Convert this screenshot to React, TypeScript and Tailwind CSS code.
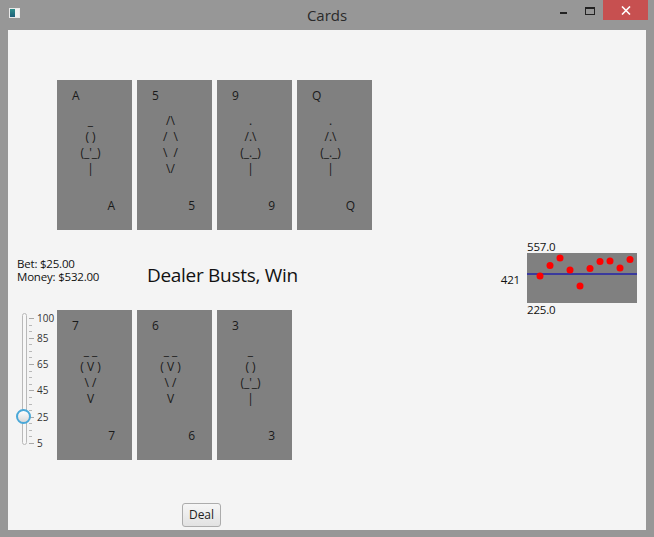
import React from "react";

const FONT = { fontFamily: '"Open Sans", "Noto Sans", sans-serif' };

const CLUB = ["_", "( )", "(_'_)", "|"];
const SPADE = [".", "/.\\", "(_._)", "|"];
const DIAMOND = ["/\\", "/  \\", "\\  /", "\\/"];
const HEART = ["_ _", "( V )", "\\ /", "V"];

function Card({ rank, art }: { rank: string; art: string[] }) {
  return (
    <div className="w-[75px] h-[150px] bg-[#808080] flex flex-col text-[12px] text-[#1a1a1a]">
      <div className="pl-[15px] pt-[8px] leading-[16px]">{rank}</div>
      <div className="mt-[9px] pr-[8px] flex flex-col items-center leading-[16px] whitespace-pre h-[64px]">
        {art.map((l, i) => (
          <div key={i}>{l}</div>
        ))}
      </div>
      <div className="mt-auto self-end pr-[17px] pb-[16px] leading-[16px]">{rank}</div>
    </div>
  );
}

const MIN = 5;
const MAX = 100;
const TOP = 8; // y of 100 within slider box
const BOTTOM = 133; // y of 5
const yOf = (v: number) => BOTTOM - ((v - MIN) * (BOTTOM - TOP)) / (MAX - MIN);

function Slider() {
  const majors = [100, 85, 65, 45, 25, 5];
  const minors: number[] = [];
  for (let v = 10; v < 100; v += 5) if (!majors.includes(v)) minors.push(v);
  return (
    <div className="relative w-[49px] h-[150px]">
      <div className="absolute left-[14px] top-[3px] w-[5px] h-[132px] rounded-full border border-[#b9b9b9] bg-[#f7f7f7]" />
      {majors.map((v) => (
        <div key={"M" + v} className="absolute left-[21px] w-[5px] h-px bg-[#a8a8a8]" style={{ top: yOf(v) }} />
      ))}
      {minors.map((v) => (
        <div key={"m" + v} className="absolute left-[21px] w-[3px] h-px bg-[#b8b8b8]" style={{ top: yOf(v) }} />
      ))}
      {majors.map((v) => (
        <div
          key={"l" + v}
          className="absolute left-[29px] text-[10px] leading-[12px] text-[#333]"
          style={{ top: yOf(v) - 6 }}
        >
          {v}
        </div>
      ))}
      <div
        className="absolute left-[8px] w-[15px] h-[15px] rounded-full border-2 border-[#4aa8d8] bg-gradient-to-b from-[#ffffff] to-[#d8d8d8]"
        style={{ top: yOf(25) - 8 }}
      />
    </div>
  );
}

const POINTS: [number, number][] = [
  [13, 23],
  [23, 12.5],
  [33, 5],
  [43, 17],
  [53, 33],
  [63, 15.5],
  [73, 8.5],
  [83, 8],
  [93, 15],
  [103, 6.5],
];

function Chart() {
  return (
    <div className="flex flex-col mt-[10px] mr-[9px] text-[11.5px] tracking-[-0.2px] text-[#111]">
      <div className="pl-[27px] leading-[13px]">557.0</div>
      <div className="flex">
        <div className="w-[20px] mr-[7px] mt-[20px] leading-[14px] text-right">421</div>
        <svg width="110" height="50" className="block">
          <rect x="0" y="0" width="110" height="50" fill="#808080" />
          <line x1="0" y1="21" x2="110" y2="21" stroke="#3a3a9e" strokeWidth="2" />
          {POINTS.map(([x, y], i) => (
            <circle key={i} cx={x} cy={y} r="3.5" fill="#ff0000" />
          ))}
        </svg>
      </div>
      <div className="pl-[27px] leading-[13px]">225.0</div>
    </div>
  );
}

export default function App() {
  return (
    <div className="w-[654px] h-[537px] bg-[#979797] flex flex-col" style={FONT}>
      <div className="h-[30px] grid grid-cols-[1fr_auto_1fr] items-start">
        <div className="flex">
          <div className="mt-[8px] ml-[9px] w-[11px] h-[10px] flex border border-[#e8e8e8] bg-[#f0f0f0]">
            <div className="w-[5px] h-full bg-gradient-to-b from-[#2f8f8a] to-[#1f5f7a]" />
          </div>
        </div>
        <div className="text-center text-[15px] leading-[30px] text-[#2a2a2a]">Cards</div>
        <div className="flex justify-end">
          <div className="mt-[12px] w-[7px] h-[2px] bg-[#222] mr-[18px]" />
          <div className="mt-[7px] w-[10px] h-[8px] border border-[#222] border-t-2 mr-[8px]" />
          <div className="w-[45px] h-[20px] bg-[#c75050] flex items-center justify-center mr-[6px]">
            <svg width="10" height="9" viewBox="0 0 10 9">
              <path d="M1 0.5 L9 8.5 M9 0.5 L1 8.5" stroke="#fff" strokeWidth="1.6" />
            </svg>
          </div>
        </div>
      </div>
      <div className="ml-[8px] w-[638px] h-[500px] bg-[#f4f4f4] flex flex-col">
        <div className="pt-[50px] pl-[49px] flex gap-[5px]">
          <Card rank="A" art={CLUB} />
          <Card rank="5" art={DIAMOND} />
          <Card rank="9" art={SPADE} />
          <Card rank="Q" art={SPADE} />
        </div>
        <div className="h-[80px] flex items-start">
          <div className="w-[139px] pl-[9px] pt-[27px] text-[11.5px] tracking-[-0.2px] leading-[13px] text-[#111]">
            <div>Bet: $25.00</div>
            <div>Money: $532.00</div>
          </div>
          <div className="pt-[33px] text-[19px] tracking-[-0.3px] leading-[24px] text-[#111]">Dealer Busts, Win</div>
          <div className="ml-auto">
            <Chart />
          </div>
        </div>
        <div className="flex">
          <Slider />
          <div className="flex gap-[5px]">
            <Card rank="7" art={HEART} />
            <Card rank="6" art={HEART} />
            <Card rank="3" art={CLUB} />
          </div>
        </div>
        <div className="pl-[174px] pt-[41px]">
          <button className="w-[39px] h-[24px] rounded-[3px] border border-[#acacac] bg-gradient-to-b from-[#f6f6f6] to-[#e2e2e2] text-[12px] text-[#222] leading-[20px]">
            Deal
          </button>
        </div>
      </div>
    </div>
  );
}
